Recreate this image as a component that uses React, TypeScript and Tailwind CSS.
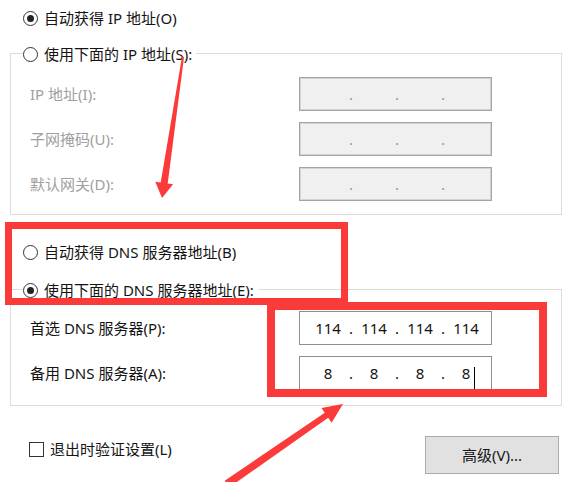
import type { ReactNode } from 'react';

const Radio = ({ checked }: { checked?: boolean }) => (
  <span className="flex h-[15px] w-[15px] shrink-0 items-center justify-center rounded-full border border-[#333333] bg-white">
    {checked && <span className="h-[7px] w-[7px] rounded-full bg-[#222222]" />}
  </span>
);

const IpBox = ({ parts, disabled, cursor }: { parts: string[]; disabled?: boolean; cursor?: boolean }) => (
  <div
    className={
      disabled
        ? 'flex h-[34px] w-[193px] items-center border border-[#a3a3a3] bg-[#f0f0f0] pl-[8px] shadow-[inset_0_0_0_1px_#d4d4d4]'
        : 'flex h-[34px] w-[193px] items-center border border-[#8f8f8f] bg-white pl-[8px]'
    }
  >
    {parts.map((p, i) => (
      <div key={i} className="flex items-center">
        <span className="relative w-[40px] text-center">
          {p}
          {cursor && i === 3 && <span className="absolute top-[1px] right-[11px] h-[22px] w-px bg-black" />}
        </span>
        {i < 3 && (
          <span className={disabled ? 'w-[6px] text-center text-[#8e98a6]' : 'w-[6px] text-center'}>.</span>
        )}
      </div>
    ))}
  </div>
);

const Row = ({ label, gray, children }: { label: string; gray?: boolean; children: ReactNode }) => (
  <div className="flex h-[34px] items-center">
    <span className={gray ? 'w-[269px] text-[#a0a0a0]' : 'w-[269px]'}>{label}</span>
    {children}
  </div>
);

export default function App() {
  return (
    <div
      className="relative h-[482px] w-[570px] overflow-hidden bg-white text-[15px] leading-none text-[#141414]"
      style={{ fontFamily: '"Noto Sans", "Noto Sans CJK SC", sans-serif' }}
    >
      {/* obtain IP automatically */}
      <div className="mt-[8px] flex h-[20px] items-center gap-[6px] pl-[23px]">
        <Radio checked />
        <span>自动获得 IP 地址(O)</span>
      </div>

      {/* manual IP group */}
      <div className="relative mt-[25px] ml-[10px] h-[162px] w-[552px] border border-[#dcdcdc] pt-[23px] pl-[19px]">
        <div className="absolute top-[-11px] left-[12px] flex h-[22px] items-center gap-[6px] bg-white pr-[4px]">
          <Radio />
          <span>使用下面的 IP 地址(S):</span>
        </div>
        <div className="flex flex-col gap-[11px]">
          <Row label="IP 地址(I):" gray>
            <IpBox parts={['', '', '', '']} disabled />
          </Row>
          <Row label="子网掩码(U):" gray>
            <IpBox parts={['', '', '', '']} disabled />
          </Row>
          <Row label="默认网关(D):" gray>
            <IpBox parts={['', '', '', '']} disabled />
          </Row>
        </div>
      </div>

      {/* obtain DNS automatically */}
      <div className="mt-[27px] flex h-[20px] items-center gap-[6px] pl-[23px]">
        <Radio />
        <span>自动获得 DNS 服务器地址(B)</span>
      </div>

      {/* manual DNS group */}
      <div className="relative mt-[27px] ml-[10px] h-[117px] w-[552px] border border-[#dcdcdc] pt-[21px] pl-[19px]">
        <div className="absolute top-[-11px] left-[12px] flex h-[22px] items-center gap-[6px] bg-white pr-[4px]">
          <Radio checked />
          <span>使用下面的 DNS 服务器地址(E):</span>
        </div>
        <div className="flex flex-col gap-[11px]">
          <Row label="首选 DNS 服务器(P):">
            <IpBox parts={['114', '114', '114', '114']} />
          </Row>
          <Row label="备用 DNS 服务器(A):">
            <IpBox parts={['8', '8', '8', '8']} cursor />
          </Row>
        </div>
      </div>

      {/* bottom row */}
      <div className="mt-[30px] flex items-start">
        <div className="mt-[3px] flex h-[20px] items-center gap-[6px] pl-[29px]">
          <span className="h-[15px] w-[15px] border border-[#333333] bg-white" />
          <span>退出时验证设置(L)</span>
        </div>
        <button className="mr-[11px] ml-auto flex h-[38px] w-[134px] items-center justify-center border border-[#adadad] bg-[#e1e1e1]">
          高级(V)...
        </button>
      </div>

      {/* annotations */}
      <div className="absolute top-[222px] left-[5px] h-[83px] w-[343px] border-[7px] border-[#fb3a3a]" />
      <div className="absolute top-[302px] left-[267px] h-[95px] w-[280px] border-[8px] border-[#fb3a3a]" />
      <svg className="pointer-events-none absolute inset-0" width="570" height="482" viewBox="0 0 570 482">
        <polygon
          fill="#fb3a3a"
          points="182,56.8 184,57.2 167.7,183.5 173.1,184.3 162,198 155.3,181.7 160.7,182.5"
        />
        <polygon
          fill="#fb3a3a"
          points="224.7,480.7 324.8,412.8 321.4,407.9 343,404 331.6,422.7 328.2,417.8 229.3,487.3"
        />
      </svg>
    </div>
  );
}
